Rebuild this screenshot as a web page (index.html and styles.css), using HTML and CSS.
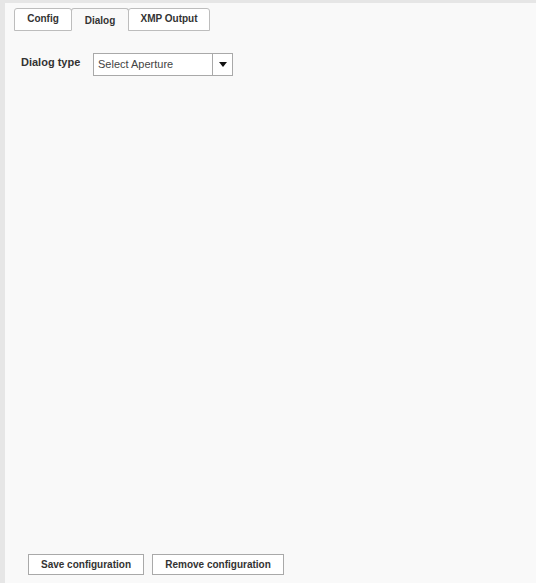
FILE: index.html
```html
<!DOCTYPE html>
<html>
<head>
<meta charset="utf-8">
<link rel="stylesheet" href="styles.css">
</head>
<body>
<div class="panel">
  <div class="tabs">
    <div class="tab">Config</div>
    <div class="tab active">Dialog</div>
    <div class="tab">XMP Output</div>
  </div>
  <div class="content">
    <div class="row">
      <label class="label">Dialog type</label>
      <div class="select">
        <span class="select-text">Select Aperture</span>
        <span class="select-btn"><span class="arrow"></span></span>
      </div>
    </div>
  </div>
  <div class="footer">
    <button class="btn">Save configuration</button>
    <button class="btn">Remove configuration</button>
  </div>
</div>
</body>
</html>
```

FILE: styles.css
```css
html, body {
  margin: 0;
  padding: 0;
  height: 100%;
}
body {
  background: #e6e6e6;
  font-family: "Liberation Sans", Arial, sans-serif;
  color: #333;
}
.panel {
  margin: 3px 0 0 5px;
  height: calc(100% - 3px);
  box-sizing: border-box;
  background: #f9f9f9;
  display: flex;
  flex-direction: column;
}
.tabs {
  display: flex;
  padding: 5px 0 0 9px;
}
.tab {
  box-sizing: border-box;
  height: 23px;
  padding: 0;
  text-align: center;
  border: 1px solid #bdbdbd;
  border-radius: 3px 3px 0 0;
  background: #fff;
  font-size: 10px;
  font-weight: bold;
  line-height: 19px;
  color: #333;
}
.tab + .tab {
  margin-left: -1px;
}
.tab:nth-child(1) { width: 58px; }
.tab:nth-child(2) { width: 58px; }
.tab:nth-child(3) { width: 82px; }
.tab.active {
  background: #f9f9f9;
  border-bottom-color: #f9f9f9;
  line-height: 23px;
}
.content {
  padding: 22px 0 0 16px;
}
.row {
  display: flex;
  align-items: flex-start;
}
.label {
  font-size: 11px;
  font-weight: bold;
  color: #333;
  width: 72px;
  line-height: 17px;
  padding-top: 1px;
}
.select {
  display: flex;
  box-sizing: border-box;
  width: 140px;
  height: 23px;
  border: 1px solid #a9a9a9;
  background: #fff;
}
.select-text {
  flex: 1;
  font-size: 11px;
  color: #444;
  line-height: 21px;
  padding-left: 4px;
}
.select-btn {
  width: 19px;
  border-left: 1px solid #a9a9a9;
  display: flex;
  align-items: center;
  justify-content: center;
}
.arrow {
  width: 0;
  height: 0;
  border-left: 4px solid transparent;
  border-right: 4px solid transparent;
  border-top: 5px solid #111;
}
.footer {
  margin-top: auto;
  padding: 0 0 8px 23px;
  display: flex;
  gap: 8px;
}
.btn {
  box-sizing: border-box;
  height: 21px;
  padding: 0;
  border: 1px solid #a9a9a9;
  background: #fff;
  font-family: "Liberation Sans", Arial, sans-serif;
  font-size: 10px;
  font-weight: bold;
  color: #333;
  border-radius: 0;
}
.btn:first-child { width: 116px; }
.btn:last-child { width: 132px; }
```
